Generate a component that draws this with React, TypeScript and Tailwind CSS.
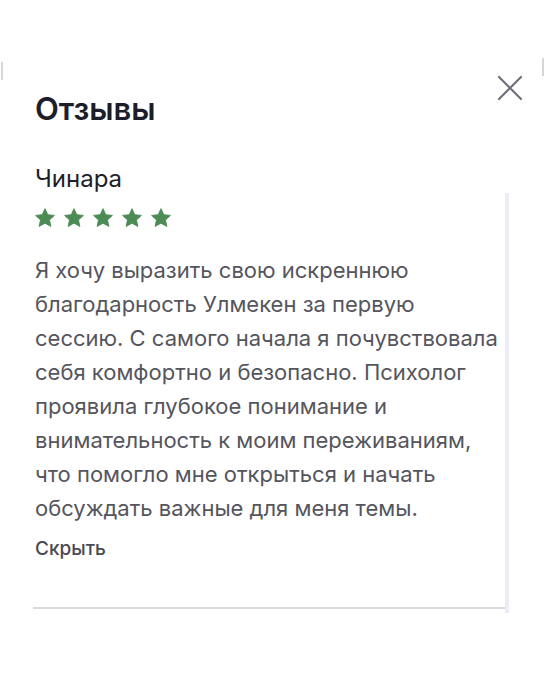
import React from "react";

const lines = [
  "Я хочу выразить свою искреннюю",
  "благодарность Улмекен за первую",
  "сессию. С самого начала я почувствовала",
  "себя комфортно и безопасно. Психолог",
  "проявила глубокое понимание и",
  "внимательность к моим переживаниям,",
  "что помогло мне открыться и начать",
  "обсуждать важные для меня темы.",
];

function Star() {
  return (
    <svg width="22" height="22" viewBox="0 0 24 24" className="shrink-0">
      <path
        d="M12 1.8l3.05 6.6 7.2.8-5.35 4.9 1.5 7.1L12 17.6l-6.4 3.6 1.5-7.1L1.75 9.2l7.2-.8z"
        fill="#4d8b55"
        stroke="#4d8b55"
        strokeWidth="1"
        strokeLinejoin="round"
      />
    </svg>
  );
}

export default function App() {
  return (
    <div
      className="relative w-[545px] h-[699px] bg-white overflow-hidden"
      style={{ fontFamily: "Inter, 'Noto Sans', sans-serif" }}
    >
      <div className="absolute left-[1px] top-[62px] w-[2px] h-[18px] bg-[#d6d6da]" />
      <div className="absolute right-[1px] top-[58px] w-[2px] h-[18px] bg-[#d6d6da]" />
      <button className="absolute left-[496px] top-[74px] w-[28px] h-[28px] flex items-center justify-center">
        <svg width="26" height="26" viewBox="0 0 26 26">
          <path d="M2 2L24 24M24 2L2 24" stroke="#70707c" strokeWidth="2.2" strokeLinecap="round" />
        </svg>
      </button>
      <div className="pt-[91px] pl-[35px]">
        <h1 className="text-[31px] leading-[36px] font-semibold text-[#1e1e2a]">Отзывы</h1>
      </div>
      <div className="flex mt-[38px] pl-[35px]">
        <div className="w-[470px] flex flex-col">
          <div className="text-[24px] leading-[28px] text-[#1e1e2a]">Чинара</div>
          <div className="flex gap-[7px] mt-[14px] ml-[-1px]">
            <Star />
            <Star />
            <Star />
            <Star />
            <Star />
          </div>
          <div className="mt-[24px] text-[22px] leading-[34px] text-[#55555d]">
            {lines.map((l, i) => (
              <div key={i} className="whitespace-nowrap">{l}</div>
            ))}
          </div>
          <div className="mt-[12px] text-[19px] leading-[24px] font-medium text-[#4a4a52]">Скрыть</div>
          <div className="mt-[46px] h-[2px] bg-[#d9d9dd] ml-[-2px]" />
        </div>
        <div className="w-[4px] mt-[28px] h-[420px] bg-[#ececf8]" />
      </div>
    </div>
  );
}
